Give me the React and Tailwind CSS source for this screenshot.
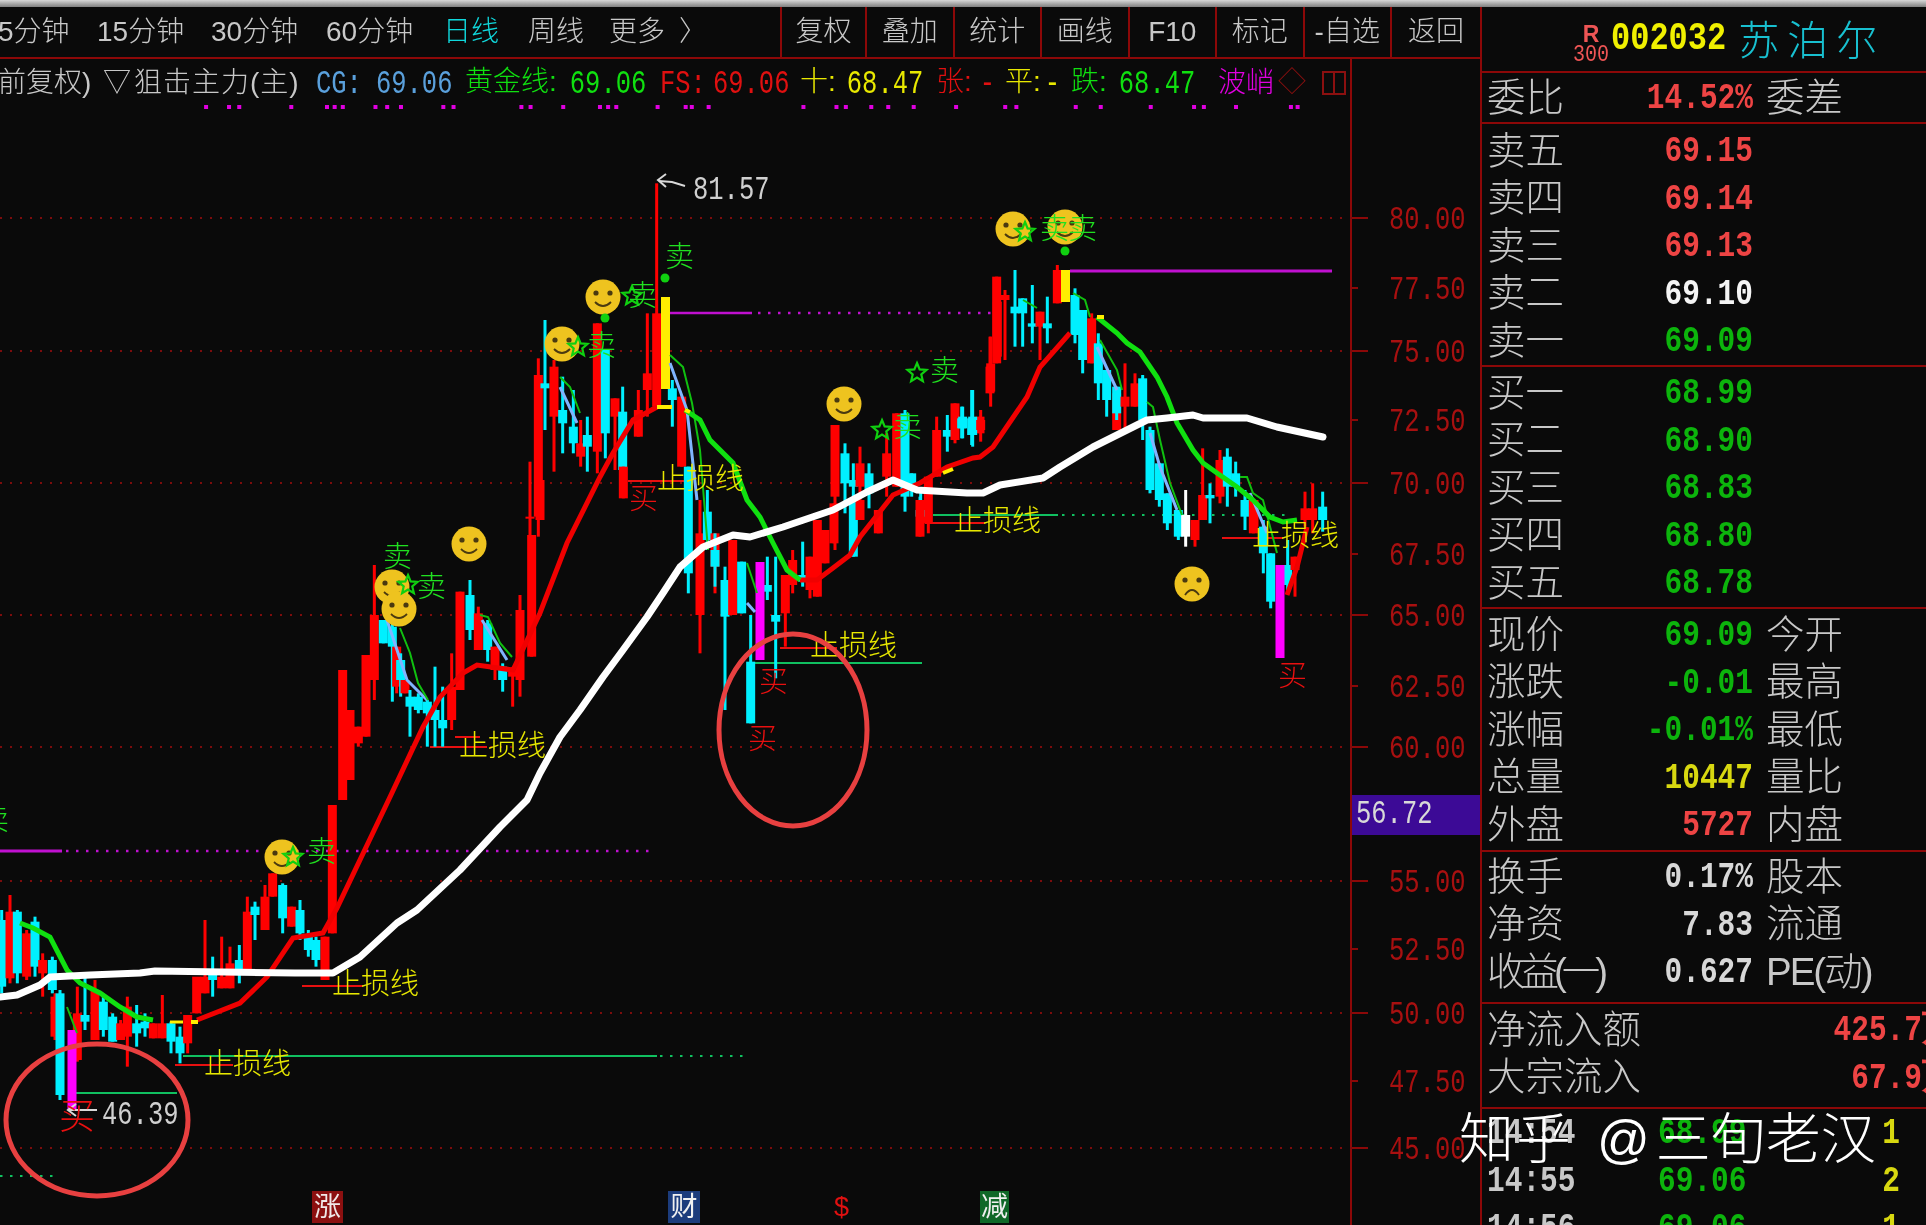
import React from "react";

const RED = "#ff0000", CY = "#00f0ff", MG = "#ff00ff", YE = "#ffee00", WH = "#ffffff";
const conv = (x0, y0, arr) =>
  arr.map(([x, h, t, b, l, c]) => [x / 3 + x0, h / 3 + y0, t / 3 + y0, b / 3 + y0, l / 3 + y0, c]);

const candles = [
  ...conv(0, 780, [
    [5,390,420,620,640,CY],[30,345,395,595,610,RED],[52,390,395,580,610,CY],[80,450,460,590,600,RED],
    [105,410,425,560,590,CY],[128,520,540,580,650,RED],[157,530,540,630,640,CY],[165,640,650,770,780,RED],
    [180,630,640,945,960,CY],[232,620,700,840,845,RED],[255,590,705,725,750,CY],[285,600,630,780,780,RED],
    [310,650,665,750,770,CY],[338,700,710,785,785,CY],[362,720,730,780,780,RED],[382,650,680,770,860,RED],
    [410,675,730,760,800,CY],[435,700,725,745,770,CY],[460,730,730,775,775,RED],[487,645,730,775,775,RED],
    [513,725,730,785,820,CY],[540,740,770,820,850,CY],[563,705,705,790,820,RED],[590,600,590,700,700,RED],
    [615,420,590,640,640,RED],[638,530,570,600,650,CY],[665,470,590,625,625,RED],[690,500,550,625,625,RED],
    [718,495,540,580,610,CY],[742,350,395,570,570,RED],[765,365,380,405,480,CY],[795,315,350,450,450,RED],
    [818,280,280,350,350,RED],[848,310,315,415,460,CY],[875,380,380,440,440,RED],[900,360,390,460,480,CY],
    [925,450,470,510,530,CY],[948,470,480,540,560,CY],[975,470,470,600,600,RED],[997,75,75,460,460,RED],
  ]),
  ...conv(340, 480, [
    [8,570,570,960,960,RED],[30,690,690,900,900,RED],[55,740,740,790,800,RED],[78,525,525,770,770,RED],
    [103,255,405,600,660,RED],[130,420,420,490,490,CY],[157,430,440,500,665,CY],[170,500,500,620,640,RED],
    [182,520,540,600,650,CY],[195,600,600,640,640,RED],[210,630,650,680,770,CY],[235,640,650,690,700,CY],
    [262,660,665,700,800,CY],[285,560,690,720,800,CY],[308,620,720,745,800,CY],[335,520,620,720,750,RED],
    [360,335,335,630,630,RED],[390,300,345,450,480,CY],[415,380,400,510,510,RED],[443,420,430,510,545,CY],
    [465,500,500,570,600,RED],[488,550,560,600,635,CY],[518,570,570,590,680,RED],[540,345,390,600,650,RED],
    [575,165,165,530,530,RED],[600,0,0,120,120,RED],
  ]),
  ...conv(500, 150, [
    [90,935,1100,1105,1200,RED],[115,625,675,1100,1160,RED],[135,510,700,715,840,CY],[162,630,650,800,965,RED],
    [188,680,780,820,910,CY],[220,720,830,880,910,CY],[242,810,880,920,950,RED],[262,800,855,890,965,CY],
    [292,520,520,905,970,RED],[316,600,600,850,925,CY],[345,745,745,800,960,RED],[368,710,785,960,970,CY],
    [370,950,950,1045,1045,RED],[415,720,780,860,860,RED],[442,490,670,720,800,RED],[470,100,490,770,770,RED],
    [517,690,715,750,830,CY],[545,740,740,950,950,RED],[1005,825,825,1040,1200,RED],[1035,880,910,1000,1090,CY],
    [1060,940,990,1010,1200,CY],[1080,890,940,1010,1060,RED],[1107,940,970,1030,1075,CY],[1160,850,910,980,1040,RED],
    [1190,790,790,1010,1010,RED],[1215,780,790,1040,1085,CY],[1235,970,970,1020,1040,CY],[1262,1020,1070,1100,1140,CY],
    [1285,980,980,1120,1150,RED],[1310,800,840,980,980,RED],[1342,795,840,860,905,CY],[1365,760,760,870,880,RED],
    [1388,770,800,835,865,CY],[1415,720,805,855,885,CY],[1440,800,800,850,850,RED],[1470,560,650,730,730,RED],
    [1490,380,380,640,640,RED],
  ]),
  ...conv(680, 500, [
    [25,-100,-100,220,280,CY],[60,0,100,345,460,RED],[82,-30,35,120,150,CY],[105,100,100,200,280,RED],[105,100,150,200,260,CY],
    [135,200,240,350,630,CY],[158,120,120,345,345,RED],[185,185,185,340,340,CY],[212,345,485,670,670,CY],
    [262,170,255,275,300,CY],[287,170,345,365,535,CY],[316,225,225,340,440,RED],[338,150,180,255,280,RED],
    [368,125,225,245,260,CY],[390,170,170,270,295,RED],[412,60,60,290,290,RED],[435,90,90,190,190,RED],
    [462,10,10,130,130,RED],[520,0,0,170,170,CY],[540,0,0,60,60,RED],[595,30,30,100,100,RED],
    [720,-10,30,50,90,CY],[720,0,0,110,110,RED],
  ]),
  ...conv(960, 200, [
    [5,620,655,685,715,CY],[38,570,650,705,740,CY],[62,630,660,690,725,RED],[92,410,490,575,620,RED],
    [112,235,305,470,470,RED],[135,270,285,300,480,RED],[165,210,320,340,440,CY],[188,295,295,340,440,CY],
    [217,255,370,380,430,CY],[240,335,335,380,480,RED],[262,290,370,385,430,CY],[292,195,210,310,310,RED],
    [345,265,285,405,430,CY],[368,330,330,480,520,CY],[395,340,355,490,490,RED],[415,400,430,550,600,CY],
    [440,510,510,600,650,CY],[470,580,580,690,690,RED],[470,560,560,640,660,CY],[495,490,590,620,690,RED],[525,520,550,620,620,RED],
    [548,525,535,660,720,CY],[570,680,690,870,880,CY],[598,790,790,900,920,CY],[622,880,880,970,990,CY],
    [655,930,930,1010,1020,CY],[677,870,945,1010,1040,WH],[705,960,960,1020,1040,RED],[728,745,885,960,960,RED],
    [750,850,885,895,970,CY],[780,750,780,890,910,RED],[802,745,770,860,920,CY],[827,785,820,860,890,CY],
    [855,870,900,950,990,CY],[880,900,900,1000,1000,RED],
  ]),
  ...conv(1120, 420, [
    [402,240,240,320,320,RED],[430,300,320,400,460,CY],[452,400,400,545,565,CY],[503,360,435,495,510,CY],
    [525,410,410,450,530,RED],[555,215,265,300,320,RED],[578,190,265,300,340,RED],[608,215,260,300,335,CY],
  ]),
  [665.5, 297, 297, 389, 389, YE],[1065.5, 270, 270, 302, 302, YE],
  [72, 1030, 1030, 1110, 1110, MG],[760, 562, 562, 660, 660, MG],[1280, 565, 565, 658, 658, MG],
];

const whiteLine = [[0,997],[17,995],[40,985],[50,977],[90,975],[140,973],[155,971],[295,973],[333,973],[360,957],[397,923],[417,910],[460,870],[500,827],[527,800],[540,773],[560,737],[580,710],[603,677],[623,650],[647,617],[663,593],[680,567],[703,547],[733,535],[750,537],[783,527],[833,510],[867,492],[893,480],[917,490],[967,493],[983,493],[1000,485],[1043,478],[1060,467],[1093,447],[1127,430],[1147,420],[1167,418],[1193,415],[1203,418],[1247,418],[1277,427],[1323,437]].map(p=>p.join(",")).join(" ");
const redLine1 = "197,1020 240,1003 267,977 293,938 323,933 337,908 390,797 423,727 440,697 463,673 477,665 513,670 540,613 567,543 600,477 613,453 633,420 657,407";
const greenA = "685,410 700,420 710,440 733,463 747,500 760,517 773,543 787,570 800,580";
const redLine2 = "800,580 817,580 833,568 850,555 860,537 893,495 920,483 947,467 973,458 980,457 993,447 1027,397 1040,367 1070,333";
const greenB = "1097,317 1117,333 1127,343 1140,352 1157,377 1167,397 1177,423 1193,450 1203,463 1217,473 1237,487 1253,500 1270,517 1283,522 1297,520";
const redLine3 = "1287,595 1297,567 1307,527";
const greenC = "20,923 33,928 50,937 67,970 80,983 100,993 120,1007 137,1017 153,1020";

const thinGreen = [
  "67,1007 77,1033","400,628 410,653 418,683 428,700","480,615 488,617 500,643 512,657","560,377 570,387 580,413",
  "670,355 683,367 692,403 700,450 708,550","747,563 757,593","1023,300 1037,308","1073,293 1085,300 1090,317",
  "1100,340 1117,370 1122,390","1147,402 1153,407 1160,440 1170,483 1182,515","1240,477 1247,477 1253,493 1263,500 1277,553",
];
const thinBlue = [
  "387,620 407,680 427,700","482,620 507,660","560,387 577,423","670,363 687,410 697,500","747,603 755,612",
  "1097,347 1117,390","1150,433 1160,467 1177,510","1250,493 1267,533",
];

const grids = [218, 351, 483, 615, 747, 881, 1013, 1148];
const axis = [
  ["80.00",218,1],["77.50",288,0],["75.00",351,1],["72.50",420,0],["70.00",483,1],["67.50",554,0],["65.00",615,1],
  ["62.50",686,0],["60.00",747,1],["55.00",881,1],["52.50",949,0],["50.00",1013,1],["47.50",1081,0],["45.00",1148,1],
];
const dots = [
  ...[400,445,465,567,637,652,668,732,755,782,865,885,1018,1036,1100,1172,1188,1204,1285,1340,1352,1385].map(x=>x/1.96),
  ...[48,122,143,200,238,295,390,500,525,658,714,826,923,945,1017,1140,1155].map(x=>x/2.24+780),
];
const smiles = [[282,857],[392,587],[399,609],[469,544],[603,297],[562,344],[844,404],[1013,229],[1065,227]];
const stars = [[293,857],[578,347],[917,373],[882,430],[1025,232],[632,296],[408,585]];
const blobs = [[665,278],[605,318],[1065,251]];

const GRN = "#20e020", BUY = "#e81010", STOP = "#e8e800";
const labels = [
  ["卖",-20,806,GRN],["卖",307,838,GRN],["卖",383,543,GRN],["卖",417,573,GRN],
  ["卖",665,243,GRN],["卖",628,282,GRN],["卖",587,332,GRN],["卖",930,357,GRN],
  ["卖",893,413,GRN],["卖",1040,215,GRN],["卖",1068,215,GRN],
  ["买",629,485,BUY],["买",759,668,BUY],["买",748,725,BUY],["买",1278,662,BUY],
  ["止损线",204,1050,STOP],["止损线",332,970,STOP],["止损线",459,732,STOP],["止损线",657,465,STOP],
  ["止损线",810,632,STOP],["止损线",954,507,STOP],["止损线",1252,522,STOP],
];

const MONO = "inline-block font-['Liberation_Mono',monospace] text-[25.5px] leading-none scale-y-[1.3]";
const BOLD = "inline-block relative top-[1px] font-['Liberation_Mono',monospace] font-bold text-[29.5px] leading-none scale-y-[1.25]";

function Smile({ x, y, sad }) {
  return (
    <g>
      <circle cx={x} cy={y} r="17.5" fill="#eec31f" />
      <circle cx={x - 7} cy={y - 4} r="2.6" fill="#4a3a10" />
      <circle cx={x + 7} cy={y - 4} r="2.6" fill="#4a3a10" />
      <path d={sad ? `M${x-7} ${y+11} Q${x} ${y+1} ${x+7} ${y+11}` : `M${x-8} ${y+5} Q${x} ${y+13} ${x+8} ${y+5}`} fill="none" stroke="#4a3a10" strokeWidth="1.8" />
    </g>
  );
}
function Star({ x, y }) {
  const pts = [];
  for (let i = 0; i < 10; i++) {
    const r = i % 2 ? 4.5 : 10, a = (Math.PI / 5) * i - Math.PI / 2;
    pts.push(`${x + r * Math.cos(a)},${y + r * Math.sin(a)}`);
  }
  return <polygon points={pts.join(" ")} fill="none" stroke="#10d010" strokeWidth="2.2" />;
}

function Chart() {
  return (
    <svg className="absolute left-0 top-0 overflow-visible" width="1352" height="1166" viewBox="0 59 1352 1166">
      {grids.map(y => <line key={y} x1="0" x2="1352" y1={y} y2={y} stroke="#7c0c0c" strokeWidth="2" strokeDasharray="2 8" />)}
      {axis.map(([t, y, big]) => <line key={t} x1="1352" x2={big ? 1368 : 1358} y1={y} y2={y} stroke="#8c0808" strokeWidth="2" />)}
      {dots.map((x, i) => <rect key={i} x={x} y="105" width="4" height="4" fill="#e000e0" />)}

      <line x1="0" x2="62" y1="851" y2="851" stroke="#c010d0" strokeWidth="3" />
      <line x1="66" x2="650" y1="851" y2="851" stroke="#c010d0" strokeWidth="2.5" strokeDasharray="2.5 7.5" />
      <line x1="670" x2="752" y1="313" y2="313" stroke="#c010d0" strokeWidth="2.5" />
      <line x1="758" x2="993" y1="313" y2="313" stroke="#c010d0" strokeWidth="2.5" strokeDasharray="2.5 7.5" />
      <line x1="1070" x2="1332" y1="271" y2="271" stroke="#c010d0" strokeWidth="3" />

      <line x1="183" x2="657" y1="1056" y2="1056" stroke="#10c060" strokeWidth="2" />
      <line x1="660" x2="743" y1="1056" y2="1056" stroke="#10c060" strokeWidth="2" strokeDasharray="2.5 7.5" />
      <line x1="72" x2="177" y1="1093" y2="1093" stroke="#10c060" strokeWidth="2" />
      <line x1="0" x2="54" y1="1176" y2="1176" stroke="#10c060" strokeWidth="2" strokeDasharray="2.5 7.5" />
      <line x1="753" x2="922" y1="663" y2="663" stroke="#10c060" strokeWidth="2" />
      <line x1="933" x2="1058" y1="515" y2="515" stroke="#10c060" strokeWidth="2" />
      <line x1="1062" x2="1292" y1="515" y2="515" stroke="#10c060" strokeWidth="2" strokeDasharray="2.5 7.5" />

      {[[175,233,1065],[302,363,986],[430,487,747],[455,480,737],[628,685,481],[780,837,648],[925,985,523],[1222,1283,538]].map(([a,b,y]) => (
        <line key={a} x1={a} x2={b} y1={y} y2={y} stroke="#e81010" strokeWidth="2" />
      ))}

      {candles.map(([x, h, t, b, l, c], i) => (
        <g key={i}>
          <rect x={x - 1.5} y={h} width="3" height={Math.max(l - h, 1)} fill={c} />
          <rect x={x - 4.5} y={t} width="9" height={Math.max(b - t, 2)} fill={c} />
        </g>
      ))}

      {thinBlue.map((p, i) => <polyline key={i} points={p} fill="none" stroke="#80b4ff" strokeWidth="3" />)}
      {thinGreen.map((p, i) => <polyline key={i} points={p} fill="none" stroke="#10c010" strokeWidth="2" />)}
      <polyline points={redLine1} fill="none" stroke="#f00000" strokeWidth="5" />
      <polyline points={redLine2} fill="none" stroke="#f00000" strokeWidth="5" />
      <polyline points={redLine3} fill="none" stroke="#f00000" strokeWidth="5" />
      <polyline points={greenA} fill="none" stroke="#10e010" strokeWidth="5" />
      <polyline points={greenB} fill="none" stroke="#10e010" strokeWidth="5" />
      <polyline points={greenC} fill="none" stroke="#10e010" strokeWidth="5" />
      <line x1="657" x2="672" y1="407" y2="407" stroke="#ffee00" strokeWidth="4" />
      <line x1="685" x2="690" y1="410" y2="412" stroke="#ffee00" strokeWidth="4" />
      <line x1="170" x2="183" y1="1022" y2="1022" stroke="#ffee00" strokeWidth="3" />
      <line x1="191" x2="198" y1="1022" y2="1022" stroke="#ffee00" strokeWidth="4" />
      <line x1="943" x2="953" y1="473" y2="469" stroke="#ffee00" strokeWidth="4" />
      <line x1="1097" x2="1104" y1="317" y2="317" stroke="#ffee00" strokeWidth="4" />
      <polyline points={whiteLine} fill="none" stroke="#ffffff" strokeWidth="7" strokeLinejoin="round" strokeLinecap="round" />

      {smiles.map(([x, y]) => <Smile key={x + "-" + y} x={x} y={y} />)}
      <Smile x={1192} y={584} sad />
      {stars.map(([x, y]) => <Star key={x + "-" + y} x={x} y={y} />)}
      {blobs.map(([x, y]) => <circle key={x} cx={x} cy={y} r="4.5" fill="#10d010" />)}

      <polyline points="68,1110 97,1110" stroke="#d8d8d8" strokeWidth="2" fill="none" />
      <polyline points="76,1104 68,1110 76,1116" stroke="#d8d8d8" strokeWidth="2" fill="none" />
      <polyline points="659,181 672,182 685,186" stroke="#d8d8d8" strokeWidth="2" fill="none" />
      <polyline points="666,174 658,180 666,187" stroke="#d8d8d8" strokeWidth="2" fill="none" />
    </svg>
  );
}

function Badge({ x, w, bg, children, color }) {
  return (
    <span className="absolute top-[1132px] flex h-[32px] items-center justify-center text-[27px] font-normal leading-none" style={{ left: x, width: w, background: bg, color }}>
      {children}
    </span>
  );
}

const Num = ({ children, className }) => <span className={`${MONO} ${className || ""}`}>{children}</span>;

function InfoRow() {
  return (
    <div className="flex h-[48px] items-center overflow-hidden whitespace-nowrap text-[28px] leading-none text-[#c8c8c8]">
      <span className="w-[105px] shrink-0 -ml-[2px]">前复权)</span>
      <span className="w-[31px] shrink-0">▽</span>
      <span className="w-[182px] shrink-0 tracking-[1px]">狙击主力(主)</span>
      <span className="w-[149px] shrink-0 text-[#5aa0dc]"><Num>CG:</Num><Num className="ml-[14px]">69.06</Num></span>
      <span className="w-[195px] shrink-0 text-[#10e010]">黄金线:<Num className="ml-[13px]">69.06</Num></span>
      <span className="w-[140px] shrink-0 text-[#e01010]"><Num>FS:</Num><Num className="ml-[7px]">69.06</Num></span>
      <span className="w-[136px] shrink-0 text-[#e8e800]">十:<Num className="ml-[11px]">68.47</Num></span>
      <span className="w-[69px] shrink-0 text-[#e01010]">张:<Num className="ml-[8px]">-</Num></span>
      <span className="w-[66px] shrink-0 text-[#e8e800]">平:<Num className="ml-[4px]">-</Num></span>
      <span className="w-[147px] shrink-0 text-[#10e010]">跌:<Num className="ml-[12px]">68.47</Num></span>
      <span className="w-[60px] shrink-0 text-[#e000e0]">波峭</span>
      <span className="w-[44px] shrink-0 text-[#8c1010]">◇</span>
      <span className="flex h-[24px] w-[24px] shrink-0 justify-center border-2 border-[#8c1010]"><span className="h-full w-[2px] bg-[#8c1010]" /></span>
    </div>
  );
}

function Toolbar() {
  const tabs = [
    ["5分钟", "w-[99px] -ml-[2px]"], ["15分钟", "w-[114px]"], ["30分钟", "w-[115px]"], ["60分钟", "w-[117px]"],
    ["日线", "w-[85px] text-[#10d8dc]"], ["周线", "w-[81px]"], ["更多", "w-[70px]"], ["〉", "w-[60px]"],
  ];
  const btns = [["复权", "w-[85px]"], ["叠加", "w-[87.5px]"], ["统计", "w-[87.5px]"], ["画线", "w-[87.5px]"], ["F10", "w-[87.5px]"], ["标记", "w-[87.5px]"], ["-自选", "w-[87.5px]"], ["返回", "flex-1"]];
  return (
    <div className="flex h-[52px] shrink-0 items-stretch whitespace-nowrap border-b-2 border-[#8c0808] text-[28px] leading-none text-[#c8c8c8]">
      <div className="flex w-[780px] shrink-0 items-center overflow-hidden">
        {tabs.map(([t, c]) => <span key={t} className={`shrink-0 ${c}`}>{t}</span>)}
      </div>
      {btns.map(([b, c]) => (
        <div key={b} className={`flex items-center justify-center border-l-2 border-[#8c0808] ${c}`}>{b}</div>
      ))}
    </div>
  );
}

function Row({ l, v, c = "text-[#d8d8d8]", r }) {
  return (
    <div className="grid h-[47.5px] grid-cols-[266px_1fr] items-center whitespace-nowrap leading-none">
      <div className="flex items-center justify-between">
        <span className="text-[38.5px] leading-none text-[#c8c8c8]">{l}</span>
        <span className={`${BOLD} ${c}`}>{v}</span>
      </div>
      {r ? <span className="pl-[13px] text-[38.5px] leading-none text-[#c8c8c8]">{r}</span> : <span />}
    </div>
  );
}

const R = "text-[#ee4444]", G = "text-[#0cb40c]", W = "text-[#f4f4f4]", Y = "text-[#d8d810]";

function Panel() {
  return (
    <div className="flex w-[446px] shrink-0 flex-col overflow-hidden border-l-2 border-[#8c0808] pl-[5px]">
      <div className="-ml-[5px] flex h-[66px] shrink-0 items-center border-b-2 border-[#8c0808] pl-[89px] whitespace-nowrap">
        <span className="flex w-[40px] shrink-0 flex-col items-center leading-none text-[#ee5555]">
          <span className="mt-[10px] text-[23px] font-bold leading-[22px]">R</span>
          <span className="font-['Liberation_Mono',monospace] text-[20px] scale-y-[1.2] leading-[20px]">300</span>
        </span>
        <span className="font-['Liberation_Mono',monospace] text-[32px] font-bold leading-none text-[#f0f000] scale-y-[1.2]">002032</span>
        <span className="relative top-[2px] ml-[12px] text-[41px] leading-none tracking-[8px] text-[#18c0d0]">苏泊尔</span>
      </div>
      <div className="-ml-[5px] h-[51px] shrink-0 border-b-2 border-[#8c0808] pl-[5px] pt-[1px]">
        <Row l="委比" v="14.52%" c={R} r="委差" />
      </div>
      <div className="-ml-[5px] h-[243px] shrink-0 border-b-2 border-[#8c0808] pl-[5px] pt-[3px]">
        <Row l="卖五" v="69.15" c={R} /><Row l="卖四" v="69.14" c={R} /><Row l="卖三" v="69.13" c={R} />
        <Row l="卖二" v="69.10" c={W} /><Row l="卖一" v="69.09" c={G} />
      </div>
      <div className="-ml-[5px] h-[242px] shrink-0 border-b-2 border-[#8c0808] pl-[5px] pt-[2px]">
        <Row l="买一" v="68.99" c={G} /><Row l="买二" v="68.90" c={G} /><Row l="买三" v="68.83" c={G} />
        <Row l="买四" v="68.80" c={G} /><Row l="买五" v="68.78" c={G} />
      </div>
      <div className="-ml-[5px] h-[243px] shrink-0 border-b-2 border-[#8c0808] pl-[5px] pt-[2px]">
        <Row l="现价" v="69.09" c={G} r="今开" /><Row l="涨跌" v="-0.01" c={G} r="最高" />
        <Row l="涨幅" v="-0.01%" c={G} r="最低" /><Row l="总量" v="10447" c={Y} r="量比" />
        <Row l="外盘" v="5727" c={R} r="内盘" />
      </div>
      <div className="-ml-[5px] h-[152px] shrink-0 border-b-2 border-[#8c0808] pl-[5px] pt-[1px]">
        <Row l="换手" v="0.17%" r="股本" /><Row l="净资" v="7.83" r="流通" />
        <Row l={<span className="inline-block tracking-[-5px]">收益(一)</span>} v="0.627" r={<span className="inline-block tracking-[-2px]">PE(动)</span>} />
      </div>
      <div className="-ml-[5px] h-[105px] shrink-0 border-b-2 border-[#8c0808] pl-[5px] pt-[2px]">
        {[["净流入额", "425.7万"], ["大宗流入", "67.9万"]].map(([l, v]) => (
          <div key={l} className="flex h-[47.5px] items-center justify-between whitespace-nowrap -mr-[26px]">
            <span className="text-[38.5px] leading-none text-[#c8c8c8]">{l}</span>
            <span className={`${BOLD} ${R}`}>{v}</span>
          </div>
        ))}
      </div>
      <div className="pr-[26px]">
        {[["14:54", "68.99", "1"], ["14:55", "69.06", "2"], ["14:56", "69.06", "1"]].map(([t, v, q]) => (
          <div key={t} className="grid h-[47.5px] grid-cols-[171px_144px_1fr] items-center leading-none">
            <span className={`${BOLD} text-[#c8c8c8]`}>{t}</span>
            <span className={`${BOLD} ${G}`}>{v}</span>
            <span className={`${BOLD} ${Y} text-right`}>{q}</span>
          </div>
        ))}
      </div>
    </div>
  );
}

export default function App() {
  return (
    <div className="relative flex h-[1225px] w-[1926px] flex-col overflow-hidden bg-[#0a0a0a] font-['Liberation_Sans','Noto_Sans_CJK_SC',sans-serif] font-light blur-[0.4px]">
      <div className="h-[7px] shrink-0 bg-gradient-to-b from-[#d8d8d8] to-[#808080]" />
      <div className="flex min-h-0 flex-1">
        <div className="flex w-[1480px] shrink-0 flex-col">
          <Toolbar />
          <div className="flex min-h-0 flex-1">
            <div className="relative w-[1352px] shrink-0 overflow-visible border-r-2 border-[#8c0808]">
              <InfoRow />
              <Chart />
              {labels.map(([t, x, y, c], i) => (
                <span key={i} className="absolute whitespace-nowrap text-[29px] leading-none" style={{ left: x, top: y - 59, color: c }}>{t}</span>
              ))}
              <span className="absolute left-[59px] top-[1040px] text-[36px] leading-none text-[#e81010]">买</span>
              <span className={`${MONO} absolute left-[102px] top-[1044px] text-[#d0d0d0]`}>46.39</span>
              <span className={`${MONO} absolute left-[693px] top-[119px] text-[#d0d0d0]`}>81.57</span>
              <Badge x={312} w={31} bg="#8c1010" color="#f0e8e8">涨</Badge>
              <Badge x={668} w={32} bg="#1c3c7c" color="#f0f0f0">财</Badge>
              <Badge x={833} w={17} color="#e01010">$</Badge>
              <Badge x={980} w={29} bg="#106828" color="#f0f0f0">减</Badge>
              <svg className="absolute left-0 top-0 overflow-visible" width="1352" height="1166" viewBox="0 59 1352 1166">
                <ellipse cx="97" cy="1120" rx="91" ry="76" fill="none" stroke="#e84040" strokeWidth="5" />
                <ellipse cx="793" cy="730" rx="74" ry="96" fill="none" stroke="#e84040" strokeWidth="5" />
              </svg>
            </div>
            <div className="relative min-w-0 flex-1">
              {axis.map(([t, y]) => (
                <span key={t} className={`${MONO} absolute left-[37px] text-[#a81010]`} style={{ top: y - 59 - 10 }}>{t}</span>
              ))}
              <div className="absolute left-0 right-0 top-[736px] flex h-[40px] items-center bg-[#3c0a96] pl-[4px]">
                <span className={`${MONO} text-[#d8d8d8]`}>56.72</span>
              </div>
            </div>
          </div>
        </div>
        <Panel />
      </div>
      <div className="absolute left-[1459px] top-[1108px] flex items-center whitespace-nowrap text-[55px] leading-[62px] text-white">
        <span className="tracking-[2px]">知乎</span>
        <span className="ml-[24px] text-[52px]">@</span>
        <span className="ml-[6px]">三旬老汉</span>
      </div>
    </div>
  );
}
